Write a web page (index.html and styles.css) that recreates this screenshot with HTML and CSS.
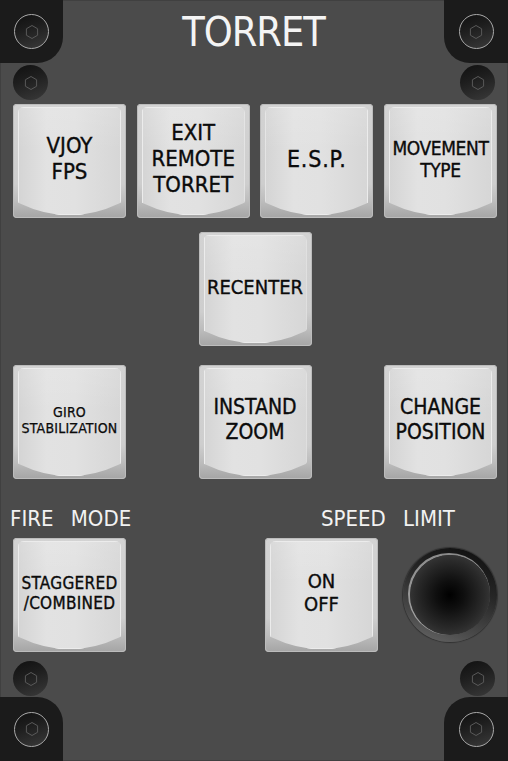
FILE: index.html
```html
<!DOCTYPE html>
<html lang="en">
<head>
<meta charset="utf-8">
<title>Torret panel</title>
<link rel="stylesheet" href="styles.css">
</head>
<body>
<div class="panel">
  <header class="frame-row top">
    <div class="corner corner-tl"><span class="screw ringed"><svg class="hex" viewBox="-8 -8 16 16"><polygon points="0,-6.5 5.6,-3.25 5.6,3.25 0,6.5 -5.6,3.25 -5.6,-3.25"/></svg></span></div>
    <h1 class="title">TORRET</h1>
    <div class="corner corner-tr"><span class="screw ringed"><svg class="hex" viewBox="-8 -8 16 16"><polygon points="0,-6.5 5.6,-3.25 5.6,3.25 0,6.5 -5.6,3.25 -5.6,-3.25"/></svg></span></div>
    <span class="screw bolt bolt-l"><svg class="hex" viewBox="-8 -8 16 16"><polygon points="0,-6.5 5.6,-3.25 5.6,3.25 0,6.5 -5.6,3.25 -5.6,-3.25"/></svg></span>
    <span class="screw bolt bolt-r"><svg class="hex" viewBox="-8 -8 16 16"><polygon points="0,-6.5 5.6,-3.25 5.6,3.25 0,6.5 -5.6,3.25 -5.6,-3.25"/></svg></span>
  </header>

  <section class="row row-four">
    <div class="btn"><div class="face lbl-lg">VJOY<br>FPS</div></div>
    <div class="btn"><div class="face lbl-md">EXIT<br>REMOTE<br>TORRET</div></div>
    <div class="btn"><div class="face lbl-esp">E.S.P.</div></div>
    <div class="btn"><div class="face lbl-sm tight">MOVEMENT<br>TYPE</div></div>
  </section>

  <section class="row row-center">
    <div class="btn"><div class="face lbl-single">RECENTER</div></div>
  </section>

  <section class="row row-three">
    <div class="btn"><div class="face lbl-xxs">GIRO<br>STABILIZATION</div></div>
    <div class="btn"><div class="face lbl-md2">INSTAND<br>ZOOM</div></div>
    <div class="btn"><div class="face lbl-md2">CHANGE<br>POSITION</div></div>
  </section>

  <section class="row controls">
    <div class="group group-fire">
      <div class="caption caption-fire">FIRE MODE</div>
      <div class="btn"><div class="face lbl-xs">STAGGERED<br>/COMBINED</div></div>
    </div>
    <div class="group group-speed">
      <div class="caption caption-speed">SPEED LIMIT</div>
      <div class="pair">
        <div class="btn"><div class="face lbl-onoff">ON<br>OFF</div></div>
        <div class="knob"><div class="knob-core"></div></div>
      </div>
    </div>
  </section>

  <footer class="frame-row bottom">
    <span class="screw bolt bolt-l"><svg class="hex" viewBox="-8 -8 16 16"><polygon points="0,-6.5 5.6,-3.25 5.6,3.25 0,6.5 -5.6,3.25 -5.6,-3.25"/></svg></span>
    <span class="screw bolt bolt-r"><svg class="hex" viewBox="-8 -8 16 16"><polygon points="0,-6.5 5.6,-3.25 5.6,3.25 0,6.5 -5.6,3.25 -5.6,-3.25"/></svg></span>
    <div class="corner corner-bl"><span class="screw ringed"><svg class="hex" viewBox="-8 -8 16 16"><polygon points="0,-6.5 5.6,-3.25 5.6,3.25 0,6.5 -5.6,3.25 -5.6,-3.25"/></svg></span></div>
    <div class="corner corner-br"><span class="screw ringed"><svg class="hex" viewBox="-8 -8 16 16"><polygon points="0,-6.5 5.6,-3.25 5.6,3.25 0,6.5 -5.6,3.25 -5.6,-3.25"/></svg></span></div>
  </footer>
</div>
</body>
</html>
```

FILE: styles.css
```css
* { box-sizing: border-box; }

html, body {
  margin: 0;
  padding: 0;
  background: #4b4b4b;
}

body {
  font-family: "DejaVu Sans Condensed", "DejaVu Sans", sans-serif;
  font-stretch: condensed;
}

.panel {
  width: 508px;
  height: 761px;
  background: #4b4b4b;
  display: flex;
  flex-direction: column;
  overflow: hidden;
  box-shadow: inset 0 0 0 1px #404040;
}

/* top and bottom frame rows */
.frame-row {
  display: grid;
  grid-template-columns: 63px 1fr 64px;
}

.top {
  grid-template-rows: 63px 41px;
}

.bottom {
  grid-template-rows: 45px 64px;
  margin-top: auto;
}

.corner {
  background: #1b1b1b;
  display: grid;
  place-items: center;
}

.corner-tl { grid-column: 1; grid-row: 1; border-bottom-right-radius: 26px; }
.corner-tr { grid-column: 3; grid-row: 1; border-bottom-left-radius: 26px; }
.corner-bl { grid-column: 1; grid-row: 2; border-top-right-radius: 26px; }
.corner-br { grid-column: 3; grid-row: 2; border-top-left-radius: 26px; }

.title {
  grid-column: 2;
  grid-row: 1;
  margin: 0;
  padding-top: 8px;
  text-align: center;
  font-size: 41px;
  line-height: 48px;
  font-weight: normal;
  letter-spacing: -1px;
  color: #f4f4f4;
}

.screw {
  width: 35px;
  height: 35px;
  border-radius: 50%;
  background: linear-gradient(160deg, #101010 0%, #1e1e1e 40%, #3a3a3a 100%);
  display: grid;
  place-items: center;
}

.screw.ringed {
  border: 1px solid #a9a9a9;
}

.bolt { align-self: start; margin-top: 2px; }
.top .bolt { grid-row: 2; }
.bottom .bolt { grid-row: 1; margin-top: 9px; }
.bolt-l { grid-column: 1; justify-self: start; margin-left: 13px; }
.bolt-r { grid-column: 3; justify-self: start; margin-left: 16px; }

.hex {
  width: 16px;
  height: 16px;
}

.hex polygon {
  fill: none;
  stroke: #595959;
  stroke-width: 1;
}

/* button rows */
.row {
  padding: 0 11px 0 13px;
}

.row-four {
  display: grid;
  grid-template-columns: repeat(4, 113px);
  column-gap: 10.67px;
}

.row-center {
  display: flex;
  justify-content: center;
  margin-top: 14px;
}

.row-three {
  display: flex;
  justify-content: space-between;
  margin-top: 19px;
}

.controls {
  display: flex;
  justify-content: space-between;
  margin-top: 27px;
}

.group {
  display: flex;
  flex-direction: column;
  gap: 6px;
}

.group-speed { width: 232px; }

.caption {
  color: #f2f2f2;
  font-size: 22px;
  line-height: 26px;
  word-spacing: 11px;
  white-space: nowrap;
}

.caption-fire { margin-left: -3px; }
.caption-speed { text-align: center; padding-left: 14px; }

.pair {
  display: flex;
  justify-content: space-between;
  align-items: center;
}

/* push buttons */
.btn {
  width: 113px;
  height: 114px;
  padding: 3px 5px;
  border-radius: 4px;
  background: linear-gradient(#d3d3d3 0%, #cecece 70%, #bdbdbd 85%, #a5a5a5 100%);
  box-shadow: inset 0 0 0 1px #bcbcbc;
}

.face {
  height: 108px;
  display: flex;
  align-items: center;
  justify-content: center;
  text-align: center;
  padding-bottom: 4px;
  color: #0b0b0b;
  -webkit-text-stroke: 0.35px #0b0b0b;
  clip-path: path("M0 6 Q0 0 6 0 L97 0 Q103 0 103 6 L103 94 Q103 96 101 96.5 Q51.5 120 2 96.5 Q0 96 0 94 Z");
  box-shadow: inset 0 0 0 1px #ececec;
  background:
    linear-gradient(to bottom, rgba(255,255,255,0.12), rgba(255,255,255,0) 40%),
    linear-gradient(to right, #d4d4d4 0%, #e2e2e2 28%, #e1e1e1 55%, #d6d6d6 100%);
}

.lbl-lg { font-size: 22px; line-height: 26px; }
.lbl-md { font-size: 22px; line-height: 26px; }
.lbl-md2 { font-size: 21px; line-height: 25px; }
.lbl-esp { font-size: 23px; line-height: 27px; letter-spacing: 0.8px; }
.lbl-single { font-size: 20px; line-height: 24px; }
.lbl-sm { font-size: 19px; line-height: 22.5px; }
.lbl-xs { font-size: 17px; line-height: 20px; letter-spacing: 0.3px; }
.lbl-xxs { font-size: 14px; line-height: 16.5px; letter-spacing: 0.2px; -webkit-text-stroke: 0.25px #0b0b0b; }
.lbl-onoff { font-size: 20px; line-height: 23.5px; }

.tight { letter-spacing: -0.4px; }

/* speed knob */
.knob {
  width: 94px;
  height: 94px;
  border-radius: 50%;
  padding: 7px;
  background: linear-gradient(200deg, #0c0c0c 0%, #262626 40%, #4a4a4a 75%, #6a6a6a 100%);
  box-shadow: 0 0 1px 1px rgba(0,0,0,0.35);
}

.knob-core {
  width: 100%;
  height: 100%;
  border-radius: 50%;
  background: radial-gradient(circle at 50% 50%, #000 0%, #0f0f0f 25%, #2a2a2a 60%, #4e4e4e 100%);
  box-shadow: -1px -1px 0 1px rgba(215,215,215,0.6);
}
```
